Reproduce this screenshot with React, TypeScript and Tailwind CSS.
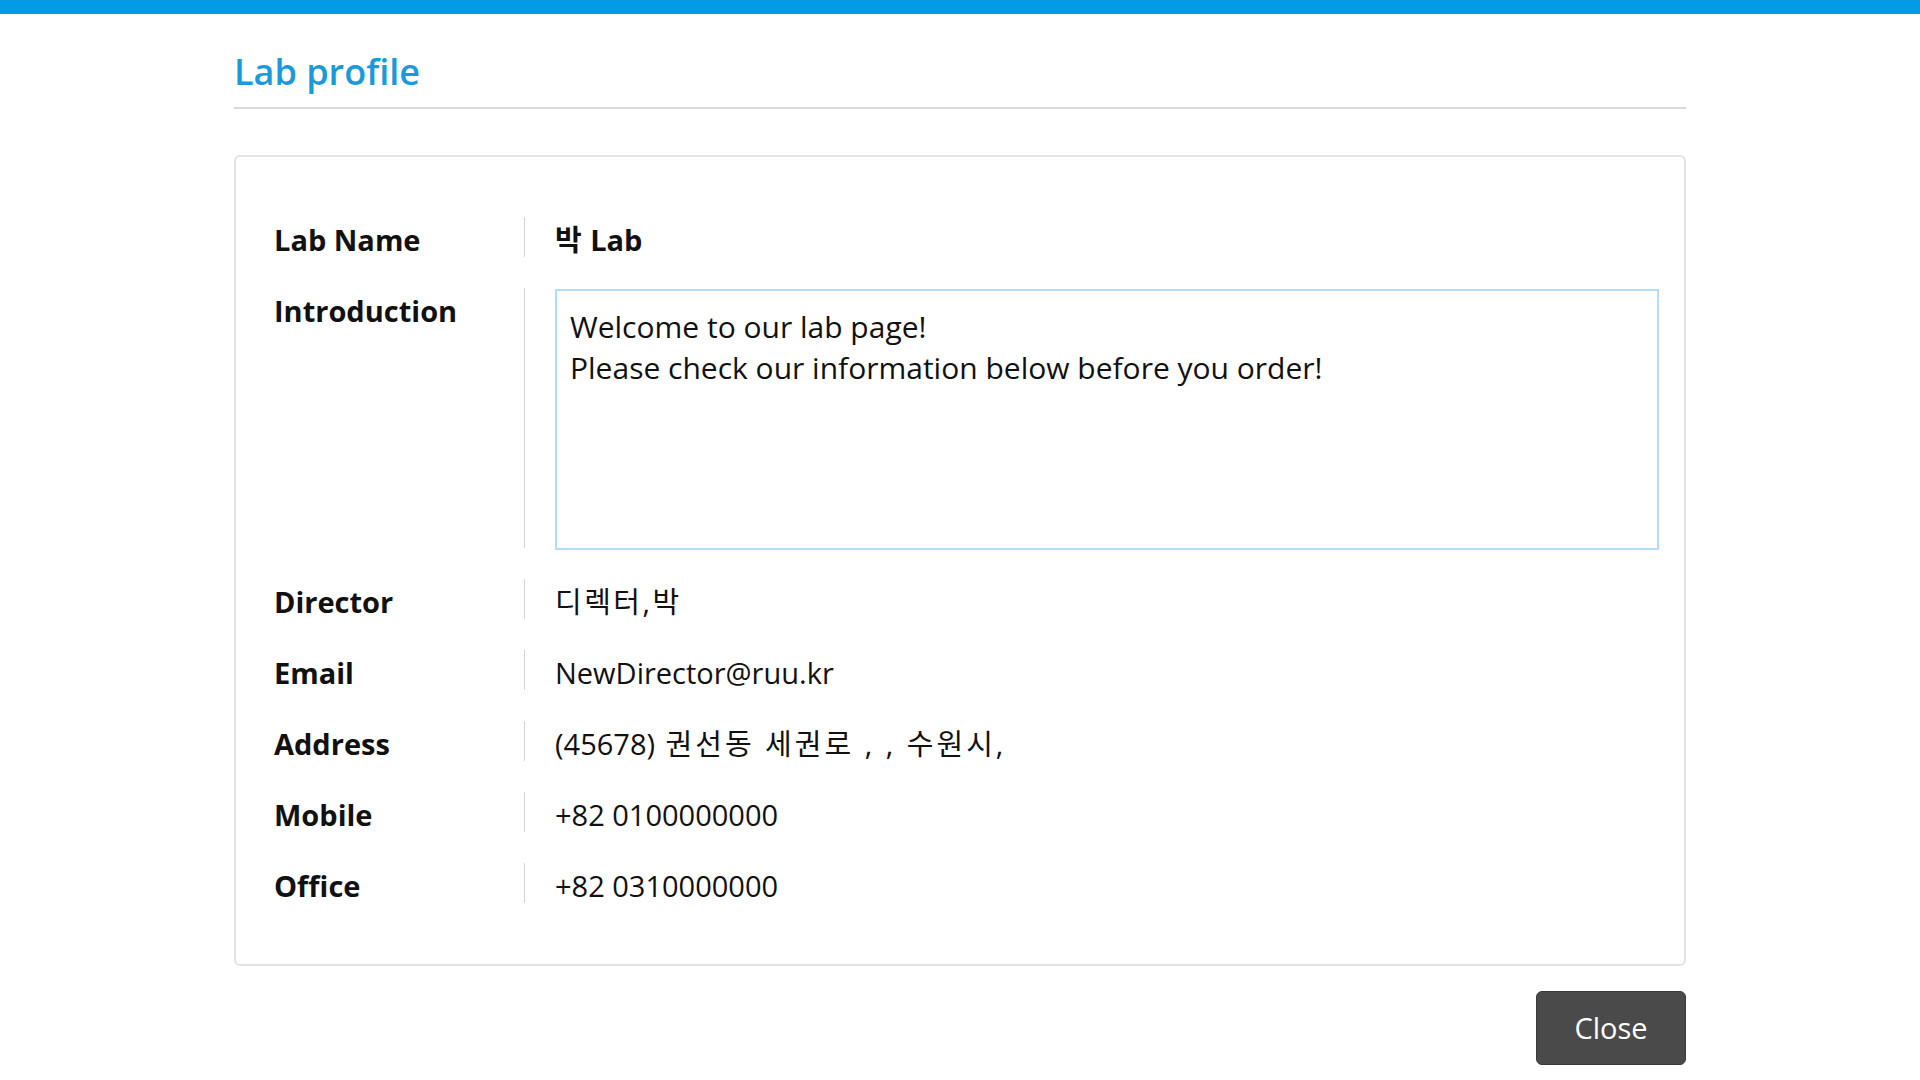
import React from 'react';

const FONT = "font-['Open_Sans','Noto_Sans_CJK_KR',sans-serif]";

function Ko({ children }: { children: React.ReactNode }) {
  // hangul in the original font runs wider than Noto's
  return <span className="tracking-[2.5px]">{children}</span>;
}

const ROWS: { label: string; value: React.ReactNode }[] = [
  { label: 'Director', value: <Ko>디렉터,박</Ko> },
  { label: 'Email', value: 'NewDirector@ruu.kr' },
  {
    label: 'Address',
    value: (
      <>
        (45678)
        <span className="tracking-[3px]"> 권선동 세권로 , , 수원시,</span>
      </>
    ),
  },
  { label: 'Mobile', value: '+82 0100000000' },
  { label: 'Office', value: '+82 0310000000' },
];

function Row({ label, children, tall }: { label: string; children: React.ReactNode; tall?: boolean }) {
  return (
    <div className="flex items-start">
      <div className="w-[250px] h-[40px] text-[29px] leading-[46px] font-bold text-[#111]">{label}</div>
      <div
        className={
          'flex-1 border-l border-[#d4d4d4] pl-[30px] text-[29px] text-[#111] ' +
          (tall ? 'h-[260px]' : 'h-[40px] leading-[46px]')
        }
      >
        {children}
      </div>
    </div>
  );
}

export default function App() {
  const intro = 'Welcome to our lab page!\nPlease check our information below before you order!';

  return (
    <div className={`min-h-screen bg-white ${FONT}`}>
      <div className="h-[14px] bg-[#039be5]" />

      <div className="w-[1452px] mx-auto">
        <div className="pt-[33px] pb-[11px]">
          <h1 className="text-[36px] leading-[49px] font-semibold text-[#1a9ad9]">Lab profile</h1>
        </div>
        <div className="h-[2px] bg-[#d9d9d9]" />

        <div className="mt-[46px] border-2 border-[#e2e2e2] rounded-[6px] pt-[60px] pb-[61px] pl-[38px] pr-[25px]">
          <div className="flex flex-col gap-[31px]">
            <Row label="Lab Name">
              <span className="font-bold">
                <span className="tracking-[1px]">박</span> Lab
              </span>
            </Row>
            <Row label="Introduction" tall>
              <textarea
                readOnly
                defaultValue={intro}
                className="block w-full h-[261px] mt-[1px] resize-none border-2 border-[#b3ddf6] px-[13px] pt-[15px] pb-[13px] text-[30px] leading-[41px] text-[#111] outline-none"
              />
            </Row>
            {ROWS.map((r) => (
              <Row key={r.label} label={r.label}>
                {r.value}
              </Row>
            ))}
          </div>
        </div>

        <div className="flex justify-end mt-[25px]">
          <button className="w-[150px] h-[74px] rounded-[6px] bg-[#4a4a4a] border border-[#3a3a3a] text-white text-[29px]">
            Close
          </button>
        </div>
      </div>
    </div>
  );
}
